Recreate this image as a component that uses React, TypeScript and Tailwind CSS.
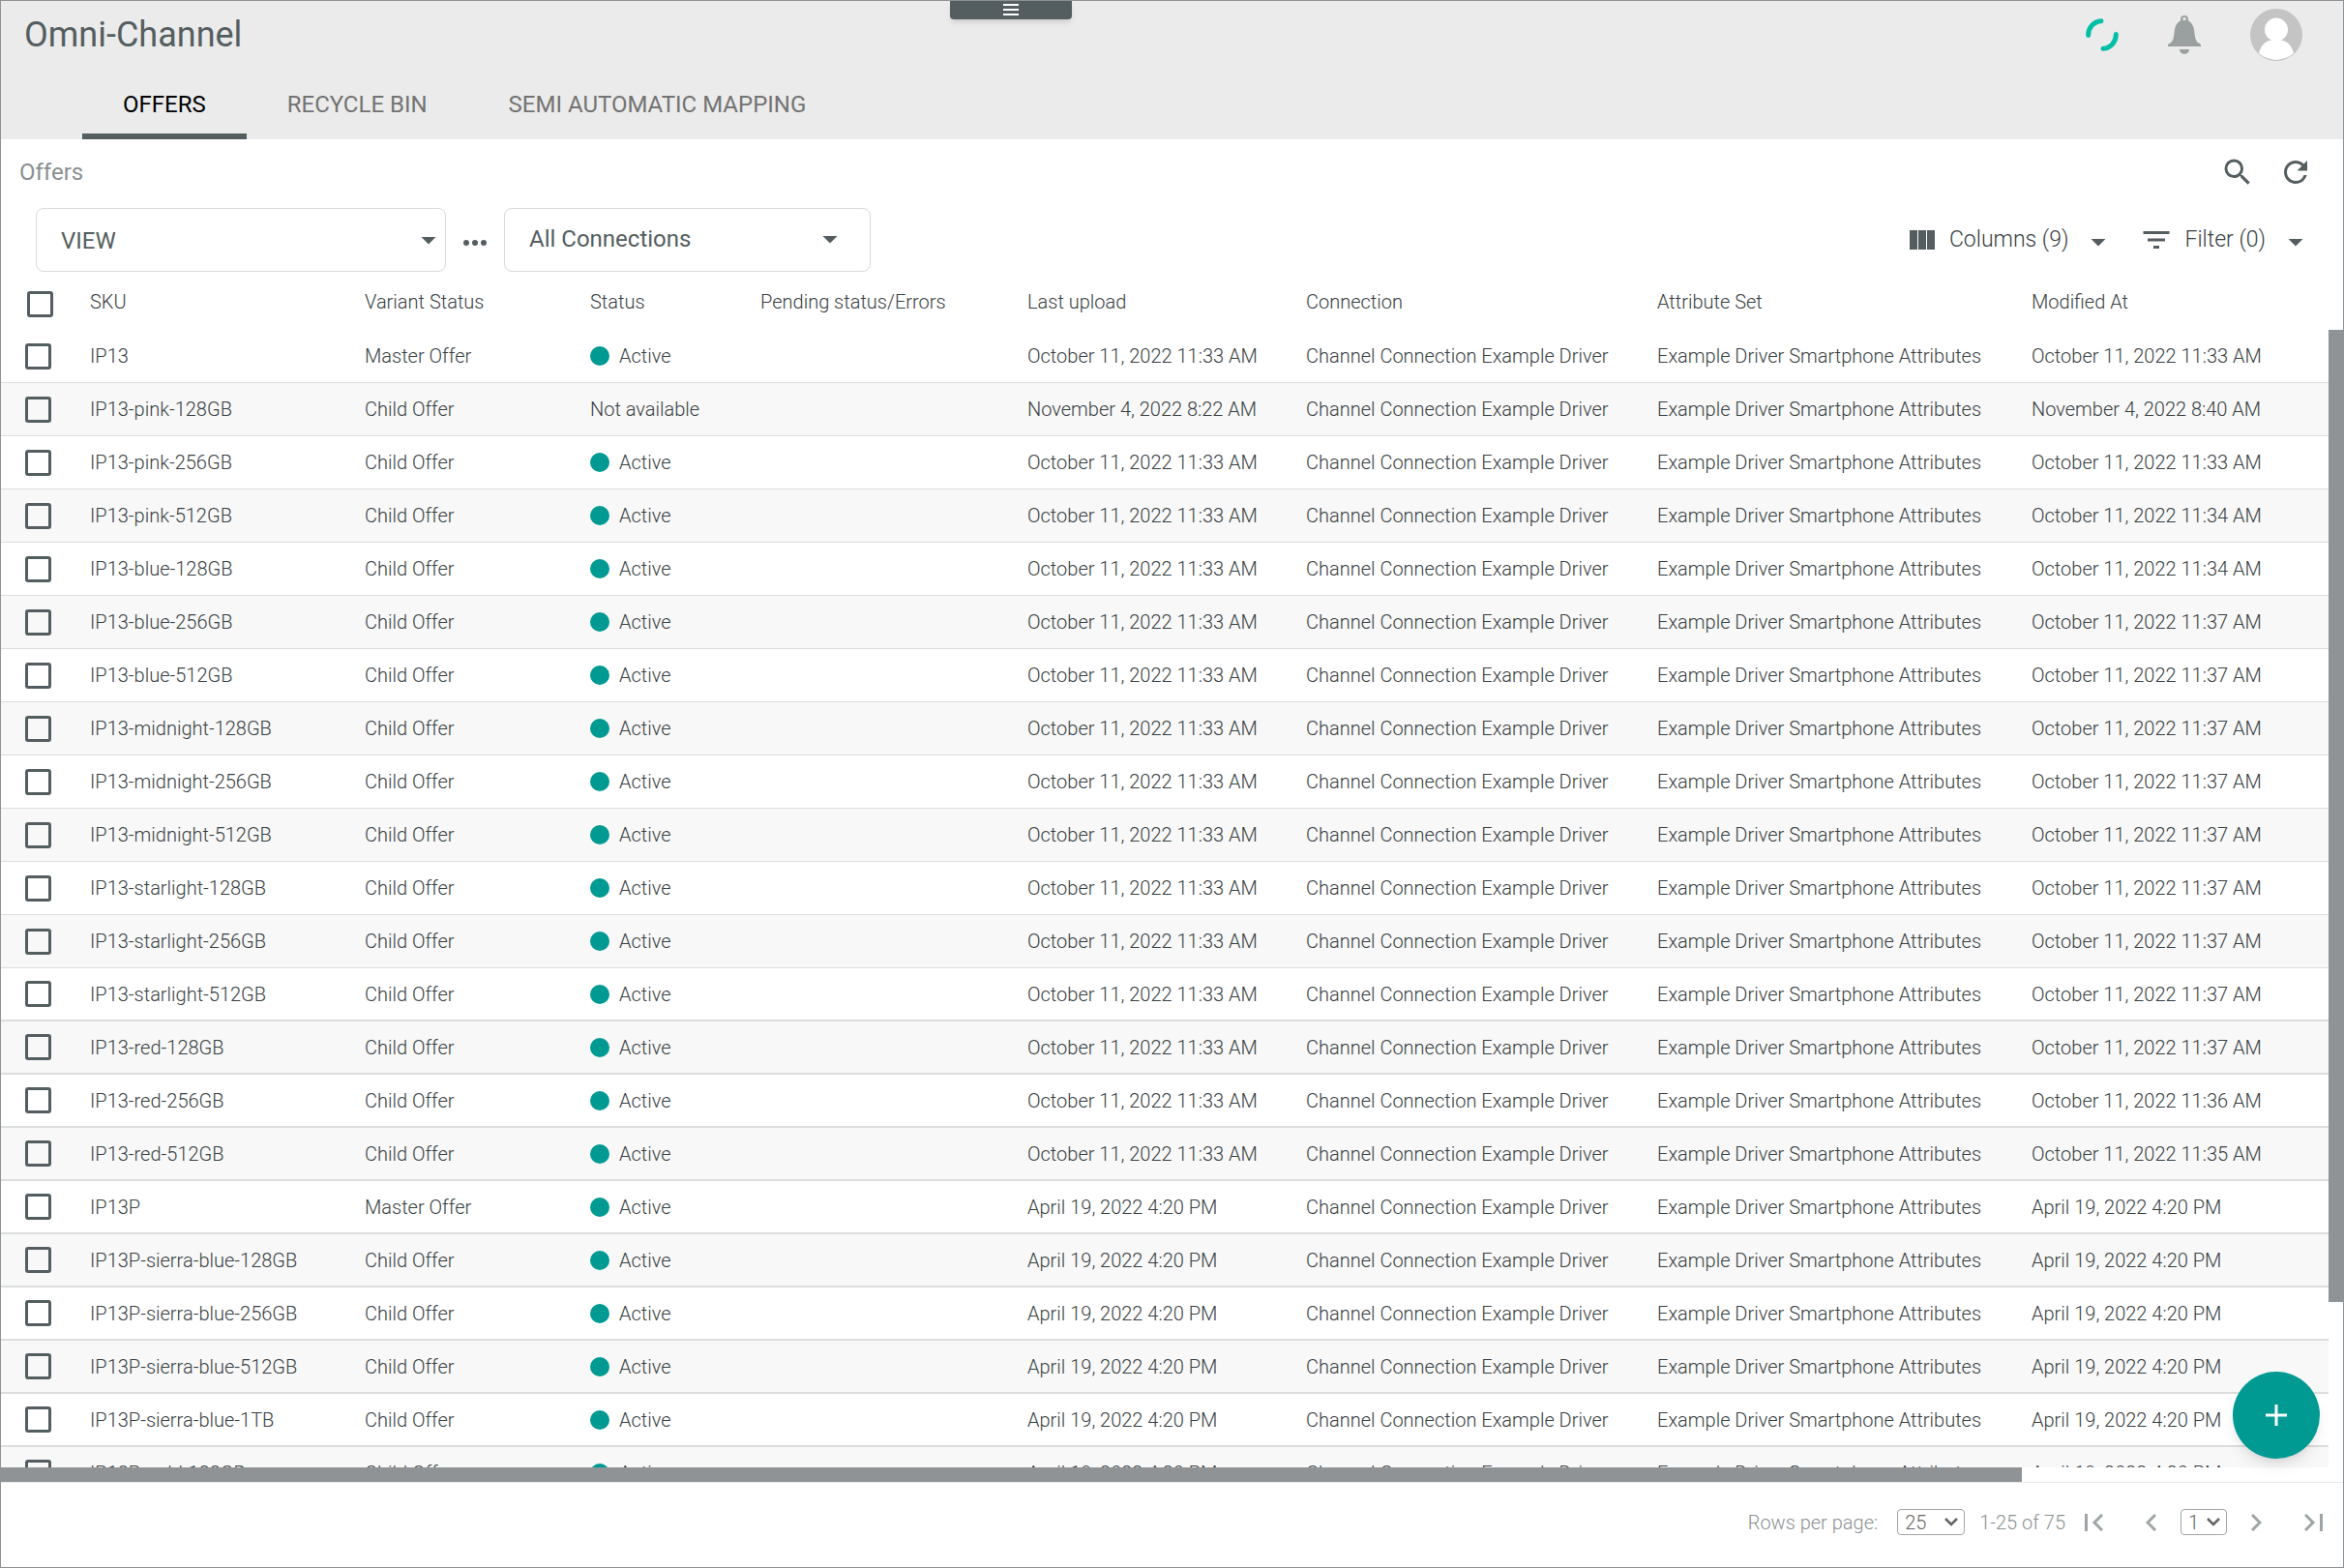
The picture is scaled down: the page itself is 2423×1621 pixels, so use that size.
import React from 'react';
import { MdSearch, MdRefresh, MdFilterList, MdArrowDropDown } from 'react-icons/md';

const headers = [
  'SKU',
  'Variant Status',
  'Status',
  'Pending status/Errors',
  'Last upload',
  'Connection',
  'Attribute Set',
  'Modified At',
];

const OCT = 'October 11, 2022 11:33 AM';
const APR = 'April 19, 2022 4:20 PM';

const offers = [
  { sku: 'IP13', variant: 'Master Offer', active: true, upload: OCT, modified: OCT },
  { sku: 'IP13-pink-128GB', variant: 'Child Offer', active: false, upload: 'November 4, 2022 8:22 AM', modified: 'November 4, 2022 8:40 AM' },
  { sku: 'IP13-pink-256GB', variant: 'Child Offer', active: true, upload: OCT, modified: OCT },
  { sku: 'IP13-pink-512GB', variant: 'Child Offer', active: true, upload: OCT, modified: 'October 11, 2022 11:34 AM' },
  { sku: 'IP13-blue-128GB', variant: 'Child Offer', active: true, upload: OCT, modified: 'October 11, 2022 11:34 AM' },
  { sku: 'IP13-blue-256GB', variant: 'Child Offer', active: true, upload: OCT, modified: 'October 11, 2022 11:37 AM' },
  { sku: 'IP13-blue-512GB', variant: 'Child Offer', active: true, upload: OCT, modified: 'October 11, 2022 11:37 AM' },
  { sku: 'IP13-midnight-128GB', variant: 'Child Offer', active: true, upload: OCT, modified: 'October 11, 2022 11:37 AM' },
  { sku: 'IP13-midnight-256GB', variant: 'Child Offer', active: true, upload: OCT, modified: 'October 11, 2022 11:37 AM' },
  { sku: 'IP13-midnight-512GB', variant: 'Child Offer', active: true, upload: OCT, modified: 'October 11, 2022 11:37 AM' },
  { sku: 'IP13-starlight-128GB', variant: 'Child Offer', active: true, upload: OCT, modified: 'October 11, 2022 11:37 AM' },
  { sku: 'IP13-starlight-256GB', variant: 'Child Offer', active: true, upload: OCT, modified: 'October 11, 2022 11:37 AM' },
  { sku: 'IP13-starlight-512GB', variant: 'Child Offer', active: true, upload: OCT, modified: 'October 11, 2022 11:37 AM' },
  { sku: 'IP13-red-128GB', variant: 'Child Offer', active: true, upload: OCT, modified: 'October 11, 2022 11:37 AM' },
  { sku: 'IP13-red-256GB', variant: 'Child Offer', active: true, upload: OCT, modified: 'October 11, 2022 11:36 AM' },
  { sku: 'IP13-red-512GB', variant: 'Child Offer', active: true, upload: OCT, modified: 'October 11, 2022 11:35 AM' },
  { sku: 'IP13P', variant: 'Master Offer', active: true, upload: APR, modified: APR },
  { sku: 'IP13P-sierra-blue-128GB', variant: 'Child Offer', active: true, upload: APR, modified: APR },
  { sku: 'IP13P-sierra-blue-256GB', variant: 'Child Offer', active: true, upload: APR, modified: APR },
  { sku: 'IP13P-sierra-blue-512GB', variant: 'Child Offer', active: true, upload: APR, modified: APR },
  { sku: 'IP13P-sierra-blue-1TB', variant: 'Child Offer', active: true, upload: APR, modified: APR },
  { sku: 'IP13P-gold-128GB', variant: 'Child Offer', active: true, upload: APR, modified: APR },
];

function Checkbox({ label }: { label: string }) {
  return (
    <input
      type="checkbox"
      aria-label={label}
      className="block size-[27px] appearance-none rounded-[3px] border-3 border-[#545e60] bg-transparent checked:bg-[#009a93]"
    />
  );
}

function Header() {
  return (
    <header className="relative bg-[#ebebeb]">
      <button
        aria-label="Open menu"
        className="absolute top-0 left-1/2 flex h-[19px] w-[126px] -translate-x-[230px] items-center justify-center rounded-b bg-[#545e60] pb-0.5 shadow-md"
      >
        <svg viewBox="0 0 16 12" className="h-3 w-4" fill="#fff">
          <path d="M0 0h16v2H0zM0 5h16v2H0zM0 10h16v2H0z" />
        </svg>
      </button>
      <div className="flex h-[70px] items-center justify-between pr-[42px] pl-6">
        <h1 className="text-[36px] text-[#545e60]">Omni-Channel</h1>
        <div className="flex items-center gap-[51px]">
          <svg viewBox="0 0 34 34" className="size-[34px]" fill="none" stroke="#00bfa5" strokeWidth="5" strokeLinecap="round">
            <path d="M2.7 17.5A14.3 14.3 0 0 1 16 2.7" />
            <path d="M31.3 16.5A14.3 14.3 0 0 1 18 31.3" />
          </svg>
          <button aria-label="Notifications">
            <svg viewBox="0 0 34 40" className="h-10 w-[34px]" fill="#9aa09f">
              <path
                fillRule="evenodd"
                d="M17 0a4 4 0 0 1 4 4v1.500c4 2 5.700 6 6.300 11 .600 6 1.200 9 3.200 11.200L34 30v2H0v-2l3.500-2.300c2-2.200 2.600-5.200 3.200-11.200C7.300 11.500 9 7.500 13 5.500V4a4 4 0 0 1 4-4zm0 1.800a1.700 1.700 0 1 0 0 3.400 1.700 1.700 0 0 0 0-3.400z"
              />
              <path d="M12 35h10a5 5 0 0 1-10 0z" />
            </svg>
          </button>
          <button aria-label="Account">
            <svg viewBox="0 0 54 54" className="size-[54px]">
              <circle cx="27" cy="27" r="27" fill="#c4c4c4" />
              <path d="M9 46C11 38 16 33 22 32.500a12 12 0 1 1 10 0C38 33 43 38 45 46A27 27 0 0 1 9 46z" fill="#fff" />
            </svg>
          </button>
        </div>
      </div>
      <nav className="flex h-[73px] pl-[84px] text-2xl text-[#737373]">
        <a href="#offers" className="flex items-center border-b-6 border-[#545e60] px-[42px] pt-1.5 text-black">OFFERS</a>
        <a href="#recycle" className="flex items-center border-b-6 border-transparent px-[42px] pt-1.5">RECYCLE BIN</a>
        <a href="#mapping" className="flex items-center border-b-6 border-transparent px-[42px] pt-1.5">SEMI AUTOMATIC MAPPING</a>
      </nav>
    </header>
  );
}

function Toolbar() {
  return (
    <div className="text-2xl text-[#545e60]">
      <div className="mb-[3px] flex h-[68px] items-center justify-between pr-[31px] pl-[19px]">
        <h2 className="text-[#899091]">Offers</h2>
        <div className="flex items-center gap-6">
          <button aria-label="Search"><MdSearch className="size-9" /></button>
          <button aria-label="Refresh"><MdRefresh className="size-9" /></button>
        </div>
      </div>
      <div className="flex items-center justify-between pr-[31px] pl-9">
        <div className="flex items-center">
          <div className="relative w-[424px]">
            <select aria-label="View" className="block h-[66px] w-full appearance-none rounded-lg border border-[#d8dadb] bg-white pt-0.5 pl-[25px]">
              <option>VIEW</option>
            </select>
            <MdArrowDropDown className="pointer-events-none absolute top-[15px] right-0 size-9" />
          </div>
          <button aria-label="More" className="flex w-[60px] justify-center gap-[3px] pt-1.5">
            <span className="size-[6px] rounded-full bg-[#545e60]" />
            <span className="size-[6px] rounded-full bg-[#545e60]" />
            <span className="size-[6px] rounded-full bg-[#545e60]" />
          </button>
          <div className="relative w-[379px]">
            <select aria-label="Connections" className="block h-[66px] w-full appearance-none rounded-lg border border-[#d8dadb] bg-white pb-0.5 pl-[25px]">
              <option>All Connections</option>
            </select>
            <MdArrowDropDown className="pointer-events-none absolute top-3.5 right-6 size-9" />
          </div>
        </div>
        <div className="flex items-center gap-6 text-[23px] font-light">
          <button className="flex items-center">
            <svg viewBox="0 0 26 20" className="mr-[15px] h-5 w-[26px]" fill="currentColor">
              <path d="M0 0h8v20H0zM9 0h8v20H9zM18 0h8v20h-8z" />
            </svg>
            <span className="text-[#374042]">Columns (9)</span>
            <MdArrowDropDown className="ml-[13px] h-10 w-9 pt-1" />
          </button>
          <button className="flex items-center">
            <MdFilterList className="mr-[11px] size-9" />
            <span className="text-[#374042]">Filter (0)</span>
            <MdArrowDropDown className="ml-[13px] h-10 w-9 pt-1" />
          </button>
        </div>
      </div>
    </div>
  );
}

function OffersTable() {
  return (
    <div className="relative h-[1236px] overflow-hidden">
      <table className="w-full table-fixed border-separate border-spacing-0 text-left text-xl font-light whitespace-nowrap text-[#374042]">
        <colgroup>
          <col className="w-[92px]" />
          <col className="w-[284px]" />
          <col className="w-[233px]" />
          <col className="w-[176px]" />
          <col className="w-[276px]" />
          <col className="w-[288px]" />
          <col className="w-[363px]" />
          <col className="w-[387px]" />
          <col />
        </colgroup>
        <thead>
          <tr className="h-[60px]">
            <th className="pt-[6px] pl-[27px]"><Checkbox label="Select all" /></th>
            {headers.map((h) => (
              <th key={h} className="pt-0.5 font-light">{h}</th>
            ))}
          </tr>
        </thead>
        <tbody>
          {offers.map((o) => (
            <tr key={o.sku} className="h-[55px] even:bg-[#f8f8f8] *:border-b *:border-[#dcdddd] nth-[n+13]:*:border-b-2">
              <td className="pl-[25px]"><Checkbox label={o.sku} /></td>
              <td>{o.sku}</td>
              <td>{o.variant}</td>
              <td>
                {o.active ? (
                  <span className="flex items-center gap-[10px]">
                    <span className="size-5 rounded-full bg-[#009a93]" />
                    Active
                  </span>
                ) : (
                  'Not available'
                )}
              </td>
              <td></td>
              <td>{o.upload}</td>
              <td>Channel Connection Example Driver</td>
              <td>Example Driver Smartphone Attributes</td>
              <td>{o.modified}</td>
            </tr>
          ))}
        </tbody>
      </table>
      <div className="absolute top-[60px] right-0 bottom-0 w-[15px] bg-white">
        <div className="h-[1005px] bg-[#8f9395]" />
      </div>
    </div>
  );
}

function Caret() {
  return (
    <svg viewBox="0 0 14 9" className="pointer-events-none absolute top-[9px] right-[7px] h-[9px] w-[14px]" fill="none" stroke="currentColor" strokeWidth="2.500">
      <path d="M1 1l6 6 6-6" />
    </svg>
  );
}

function Footer() {
  return (
    <footer className="flex h-[88px] items-center justify-end border-t border-[#ebebeb] pr-[21px] pb-1.5 text-xl font-light text-[#9fa5a6]">
      <label htmlFor="rows" className="text-[#8b9293]">Rows per page:</label>
      <div className="relative ml-5 text-[#666]">
        <select id="rows" className="block h-[27px] w-[70px] appearance-none rounded border border-[#a0a5a6] pl-[7px] leading-none">
          <option>25</option>
        </select>
        <Caret />
      </div>
      <span className="ml-[15px] text-[#8b9293]">1-25 of 75</span>
      <button aria-label="First page" className="ml-5">
        <svg viewBox="0 0 19 18" className="h-[18px] w-[19px]" fill="none" stroke="currentColor" strokeWidth="3">
          <path d="M1.500 0v18M18 1L10 9l8 8" />
        </svg>
      </button>
      <button aria-label="Previous page" className="ml-11">
        <svg viewBox="0 0 11 18" className="h-[18px] w-[11px]" fill="none" stroke="currentColor" strokeWidth="3">
          <path d="M10 1L2 9l8 8" />
        </svg>
      </button>
      <div className="relative ml-[25px] text-[#666]">
        <select aria-label="Page" className="block h-[27px] w-12 appearance-none rounded border border-[#a0a5a6] pl-[7px] leading-none">
          <option>1</option>
        </select>
        <Caret />
      </div>
      <button aria-label="Next page" className="ml-[25px]">
        <svg viewBox="0 0 11 18" className="h-[18px] w-[11px]" fill="none" stroke="currentColor" strokeWidth="3">
          <path d="M1 1l8 8-8 8" />
        </svg>
      </button>
      <button aria-label="Last page" className="ml-11">
        <svg viewBox="0 0 19 18" className="h-[18px] w-[19px]" fill="none" stroke="currentColor" strokeWidth="3">
          <path d="M17.500 0v18M1 1l8 8-8 8" />
        </svg>
      </button>
    </footer>
  );
}

export default function App() {
  return (
    <div className="min-h-screen border border-[#8f9394] bg-white font-[Roboto,sans-serif]">
      <Header />
      <main>
        <Toolbar />
        <div className="relative">
          <OffersTable />
          <div className="h-[15px] pr-[332px]">
            <div className="h-full bg-[#8f9395]" />
          </div>
          <button
            aria-label="Add offer"
            className="absolute right-6 bottom-6 flex size-[90px] items-center justify-center rounded-full bg-[#009a93] shadow-lg"
          >
            <svg viewBox="0 0 22 22" className="size-[22px]" fill="none" stroke="#fff" strokeWidth="3">
              <path d="M11 0v22M0 11h22" />
            </svg>
          </button>
        </div>
      </main>
      <Footer />
    </div>
  );
}
